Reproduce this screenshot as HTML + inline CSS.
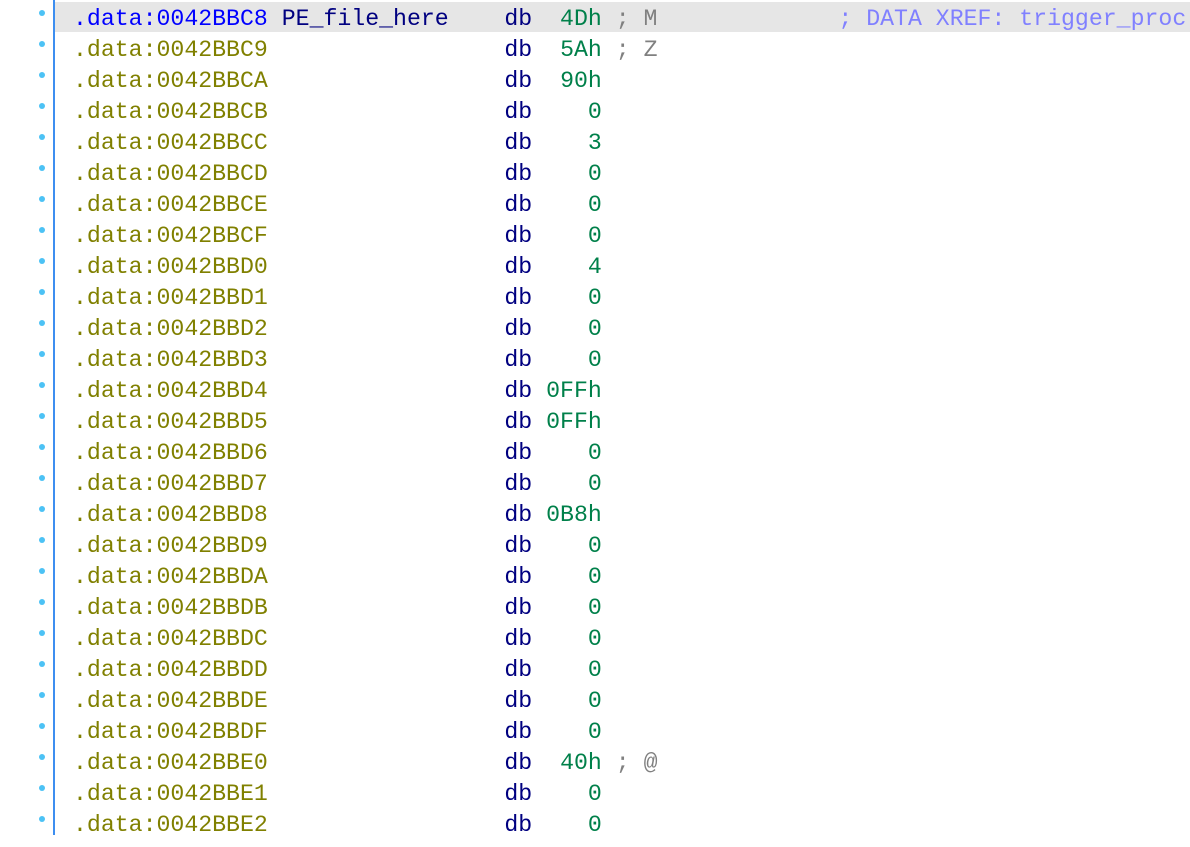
<html><head><style>
body{margin:0;width:1190px;height:835px;background:#fff;overflow:hidden;position:relative;font-family:"Liberation Mono",monospace;}
.vl{position:absolute;left:53px;top:0;width:2px;height:835px;background:#3d8ef0;}
.hl{position:absolute;left:55px;top:2px;width:1135px;height:30px;background:#e6e6e6;}
.dots{position:absolute;left:39px;top:10px;}
.dots i{display:block;width:6px;height:6px;border-radius:3px;background:#4cc2f5;margin-bottom:25px;}
.rows{position:absolute;left:73px;top:4px;font-size:23.2px;line-height:31px;white-space:pre;}
.a{color:#808000}.b{color:#0000ff}.n{color:#000080}.d{color:#00804a}.c{color:#808080}.x{color:#8080ff}
</style></head><body>
<div class="hl"></div><div class="vl"></div>
<div class="dots"><i></i><i></i><i></i><i></i><i></i><i></i><i></i><i></i><i></i><i></i><i></i><i></i><i></i><i></i><i></i><i></i><i></i><i></i><i></i><i></i><i></i><i></i><i></i><i></i><i></i><i></i><i></i></div>
<div class="rows"><span class="b">.data:0042BBC8</span> <span class="n">PE_file_here    db</span>  <span class="d">4Dh</span> <span class="c">; M</span>             <span class="x">; DATA XREF: trigger_proc</span>
<span class="a">.data:0042BBC9</span>                 <span class="n">db</span>  <span class="d">5Ah</span> <span class="c">; Z</span>
<span class="a">.data:0042BBCA</span>                 <span class="n">db</span>  <span class="d">90h</span>
<span class="a">.data:0042BBCB</span>                 <span class="n">db</span>    <span class="d">0</span>
<span class="a">.data:0042BBCC</span>                 <span class="n">db</span>    <span class="d">3</span>
<span class="a">.data:0042BBCD</span>                 <span class="n">db</span>    <span class="d">0</span>
<span class="a">.data:0042BBCE</span>                 <span class="n">db</span>    <span class="d">0</span>
<span class="a">.data:0042BBCF</span>                 <span class="n">db</span>    <span class="d">0</span>
<span class="a">.data:0042BBD0</span>                 <span class="n">db</span>    <span class="d">4</span>
<span class="a">.data:0042BBD1</span>                 <span class="n">db</span>    <span class="d">0</span>
<span class="a">.data:0042BBD2</span>                 <span class="n">db</span>    <span class="d">0</span>
<span class="a">.data:0042BBD3</span>                 <span class="n">db</span>    <span class="d">0</span>
<span class="a">.data:0042BBD4</span>                 <span class="n">db</span> <span class="d">0FFh</span>
<span class="a">.data:0042BBD5</span>                 <span class="n">db</span> <span class="d">0FFh</span>
<span class="a">.data:0042BBD6</span>                 <span class="n">db</span>    <span class="d">0</span>
<span class="a">.data:0042BBD7</span>                 <span class="n">db</span>    <span class="d">0</span>
<span class="a">.data:0042BBD8</span>                 <span class="n">db</span> <span class="d">0B8h</span>
<span class="a">.data:0042BBD9</span>                 <span class="n">db</span>    <span class="d">0</span>
<span class="a">.data:0042BBDA</span>                 <span class="n">db</span>    <span class="d">0</span>
<span class="a">.data:0042BBDB</span>                 <span class="n">db</span>    <span class="d">0</span>
<span class="a">.data:0042BBDC</span>                 <span class="n">db</span>    <span class="d">0</span>
<span class="a">.data:0042BBDD</span>                 <span class="n">db</span>    <span class="d">0</span>
<span class="a">.data:0042BBDE</span>                 <span class="n">db</span>    <span class="d">0</span>
<span class="a">.data:0042BBDF</span>                 <span class="n">db</span>    <span class="d">0</span>
<span class="a">.data:0042BBE0</span>                 <span class="n">db</span>  <span class="d">40h</span> <span class="c">; @</span>
<span class="a">.data:0042BBE1</span>                 <span class="n">db</span>    <span class="d">0</span>
<span class="a">.data:0042BBE2</span>                 <span class="n">db</span>    <span class="d">0</span></div>
</body></html>
